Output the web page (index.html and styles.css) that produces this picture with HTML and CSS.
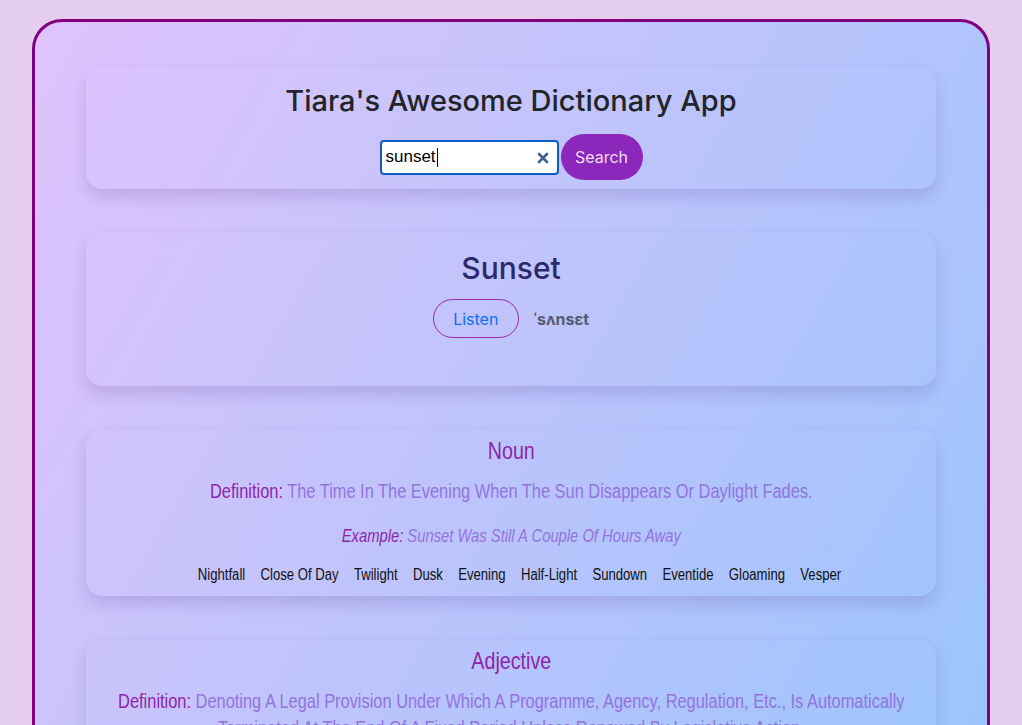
FILE: index.html
```html
<!DOCTYPE html>
<html lang="en">
<head>
<meta charset="utf-8">
<title>Tiara's Awesome Dictionary App</title>
<link rel="stylesheet" href="styles.css">
</head>
<body>
<div class="app">
  <section class="card search-card">
    <h1 class="app-title">Tiara's Awesome Dictionary App</h1>
    <form class="search-row">
      <div class="search-input">
        <span class="search-value">sunset</span><span class="caret"></span>
        <svg class="clear-icon" width="12" height="12" viewBox="0 0 12 12"><path d="M2 2 L10 10 M10 2 L2 10" stroke="#41618f" stroke-width="2.6" stroke-linecap="round"/></svg>
      </div>
      <button type="button" class="search-btn">Search</button>
    </form>
  </section>

  <section class="card word-card">
    <h2 class="word">Sunset</h2>
    <div class="phonetic-row">
      <button type="button" class="listen-btn">Listen</button>
      <span class="phonetic">ˈsʌnsɛt</span>
    </div>
  </section>

  <section class="card meaning-card">
    <div class="meaning-body">
      <h3 class="pos">Noun</h3>
      <p class="definition"><span class="label">Definition:</span> The Time In The Evening When The Sun Disappears Or Daylight Fades.</p>
      <p class="example"><span class="label">Example:</span> Sunset Was Still A Couple Of Hours Away</p>
      <ul class="synonyms">
        <li>Nightfall</li><li>Close Of Day</li><li>Twilight</li><li>Dusk</li><li>Evening</li><li>Half-Light</li><li>Sundown</li><li>Eventide</li><li>Gloaming</li><li>Vesper</li>
      </ul>
    </div>
  </section>

  <section class="card meaning-card">
    <div class="meaning-body">
      <h3 class="pos">Adjective</h3>
      <p class="definition"><span class="label">Definition:</span> Denoting A Legal Provision Under Which A Programme, Agency, Regulation, Etc., Is Automatically Terminated At The End Of A Fixed Period Unless Renewed By Legislative Action.</p>
      <p class="example"><span class="label">Example:</span> A Sunset Clause In The Contract</p>
    </div>
  </section>
</div>
</body>
</html>
```

FILE: styles.css
```css
* { box-sizing: border-box; }

html, body {
  margin: 0;
  padding: 0;
}

body {
  background: #e5cdf0;
  font-family: Inter, "Noto Sans", "Liberation Sans", sans-serif;
  color: #212529;
  overflow-x: hidden;
}

.app {
  width: 958px;
  margin: 19px auto 0;
  border: 3px solid #800080;
  border-radius: 30px;
  background: linear-gradient(120deg, #e0c3fc 0%, #8ec5fc 100%);
  padding: 45px 51px 420px;
  display: flex;
  flex-direction: column;
  gap: 44px;
}

.card {
  border-radius: 16px;
  box-shadow: 0 8px 16px rgba(60, 30, 120, 0.16);
  text-align: center;
}

.search-card {
  padding: 17px 0 9px;
}

.app-title {
  margin: 0 0 16px;
  font-size: 29px;
  line-height: 34px;
  font-weight: 500;
  color: #212529;
}

.search-row {
  margin: 0;
  display: flex;
  justify-content: center;
  align-items: center;
  gap: 2px;
}

.search-input {
  position: relative;
  width: 179px;
  height: 35px;
  background: #fff;
  border: 2px solid #0b5fc6;
  border-radius: 4px;
  display: flex;
  align-items: center;
  padding-left: 4px;
  font-family: "Liberation Sans", Arial, sans-serif;
  font-size: 17px;
  color: #000;
}

.caret {
  display: inline-block;
  width: 1px;
  height: 19px;
  background: #000;
  margin-left: 1px;
}

.clear-icon {
  position: absolute;
  right: 8px;
  top: 10px;
}

.search-btn {
  width: 82px;
  height: 46px;
  border: none;
  border-radius: 23px;
  background: #8b27bb;
  color: #f3def3;
  font-family: Inter, "Noto Sans", sans-serif;
  font-size: 16px;
  padding: 0;
}

.word-card {
  padding: 16px 0 48px;
}

.word {
  margin: 0 0 12px;
  font-size: 30px;
  line-height: 38px;
  font-weight: 500;
  color: #2b2a6c;
}

.phonetic-row {
  display: flex;
  justify-content: center;
  align-items: center;
  gap: 15px;
}

.listen-btn {
  width: 86px;
  height: 39px;
  border: 1px solid #9c27b0;
  border-radius: 20px;
  background: transparent;
  color: #0d6efd;
  font-family: Inter, "Noto Sans", sans-serif;
  font-size: 16px;
  padding: 0;
}

.phonetic {
  font-family: Inter, "Noto Sans", sans-serif;
  font-weight: 700;
  font-size: 16px;
  color: #575b70;
}

.meaning-card {
  padding: 7px 0 11px;
}

/* Arial-Narrow look: Liberation Sans condensed to 82% */
.meaning-body {
  width: calc(100% / 0.82);
  margin-left: calc((100% - 100% / 0.82) / 2);
  padding: 0 30px;
  transform: scaleX(0.82);
  transform-origin: center;
  font-family: "Liberation Sans", Arial, sans-serif;
}

.pos {
  margin: 0 0 13px;
  font-size: 24px;
  line-height: 28px;
  font-weight: 400;
  color: #8e24aa;
}

.definition {
  margin: 0;
  font-size: 20px;
  line-height: 27px;
  color: #9373e0;
}

.example {
  margin: 20px 0 0;
  font-size: 18px;
  line-height: 22px;
  font-style: italic;
  color: #9373e0;
}

.label {
  color: #8e24aa;
}

.synonyms {
  list-style: none;
  margin: 18px 0 0;
  padding: 0 0 0 20px;
  display: flex;
  justify-content: center;
  gap: 18.7px;
  font-size: 16px;
  line-height: 20px;
  color: #111;
}
```
